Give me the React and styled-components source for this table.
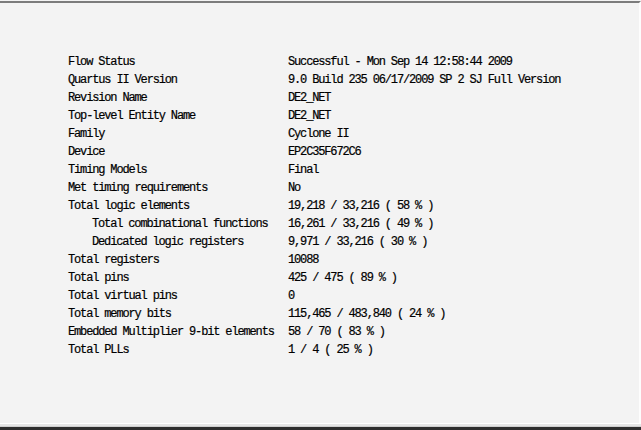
import React from "react";
import styled, { createGlobalStyle } from "styled-components";

const Global = createGlobalStyle`
  html, body { margin: 0; padding: 0; background: #f3f3f3; }
  body { width: 641px; height: 430px; overflow: hidden; }
`;

const Frame = styled.div`
  width: 641px;
  height: 430px;
  box-sizing: border-box;
  background: #f3f3f3;
  padding-top: 1px;
  display: flex;
  flex-direction: column;
`;

const Panel = styled.div`
  flex: 1;
  box-sizing: border-box;
  border-top: 2px solid #7c7c7c;
  border-right: 2px solid #fdfdfd;
  border-bottom: 1px solid #ffffff;
  padding: 50px 0 0 68px;
`;

const BottomEdge = styled.div`
  height: 6px;
  box-sizing: border-box;
  border-top: 2px solid #e6e6e6;
  border-bottom: 3px solid #2e2e2e;
  background: #cfcfcf;
`;

const Table = styled.div`
  display: grid;
  grid-template-columns: 220px auto;
  font-family: "Liberation Mono", "DejaVu Sans Mono", monospace;
  font-size: 12px;
  letter-spacing: -1.15px;
  line-height: 18px;
  color: #000;
  font-weight: 400;
  -webkit-text-stroke: 0.2px #000;
`;

const Label = styled.div`
  padding-left: ${(p) => (p.$indent ? 24 : 0)}px;
  white-space: pre;
`;

const Value = styled.div`
  white-space: pre;
`;

const rows = [
  ["Flow Status", "Successful - Mon Sep 14 12:58:44 2009"],
  ["Quartus II Version", "9.0 Build 235 06/17/2009 SP 2 SJ Full Version"],
  ["Revision Name", "DE2_NET"],
  ["Top-level Entity Name", "DE2_NET"],
  ["Family", "Cyclone II"],
  ["Device", "EP2C35F672C6"],
  ["Timing Models", "Final"],
  ["Met timing requirements", "No"],
  ["Total logic elements", "19,218 / 33,216 ( 58 % )"],
  ["Total combinational functions", "16,261 / 33,216 ( 49 % )", true],
  ["Dedicated logic registers", "9,971 / 33,216 ( 30 % )", true],
  ["Total registers", "10088"],
  ["Total pins", "425 / 475 ( 89 % )"],
  ["Total virtual pins", "0"],
  ["Total memory bits", "115,465 / 483,840 ( 24 % )"],
  ["Embedded Multiplier 9-bit elements", "58 / 70 ( 83 % )"],
  ["Total PLLs", "1 / 4 ( 25 % )"],
];

export default function App() {
  return (
    <>
      <Global />
      <Frame>
        <Panel>
          <Table>
            {rows.map(([k, v, indent]) => (
              <React.Fragment key={k}>
                <Label $indent={indent}>{k}</Label>
                <Value>{v}</Value>
              </React.Fragment>
            ))}
          </Table>
        </Panel>
        <BottomEdge />
      </Frame>
    </>
  );
}
